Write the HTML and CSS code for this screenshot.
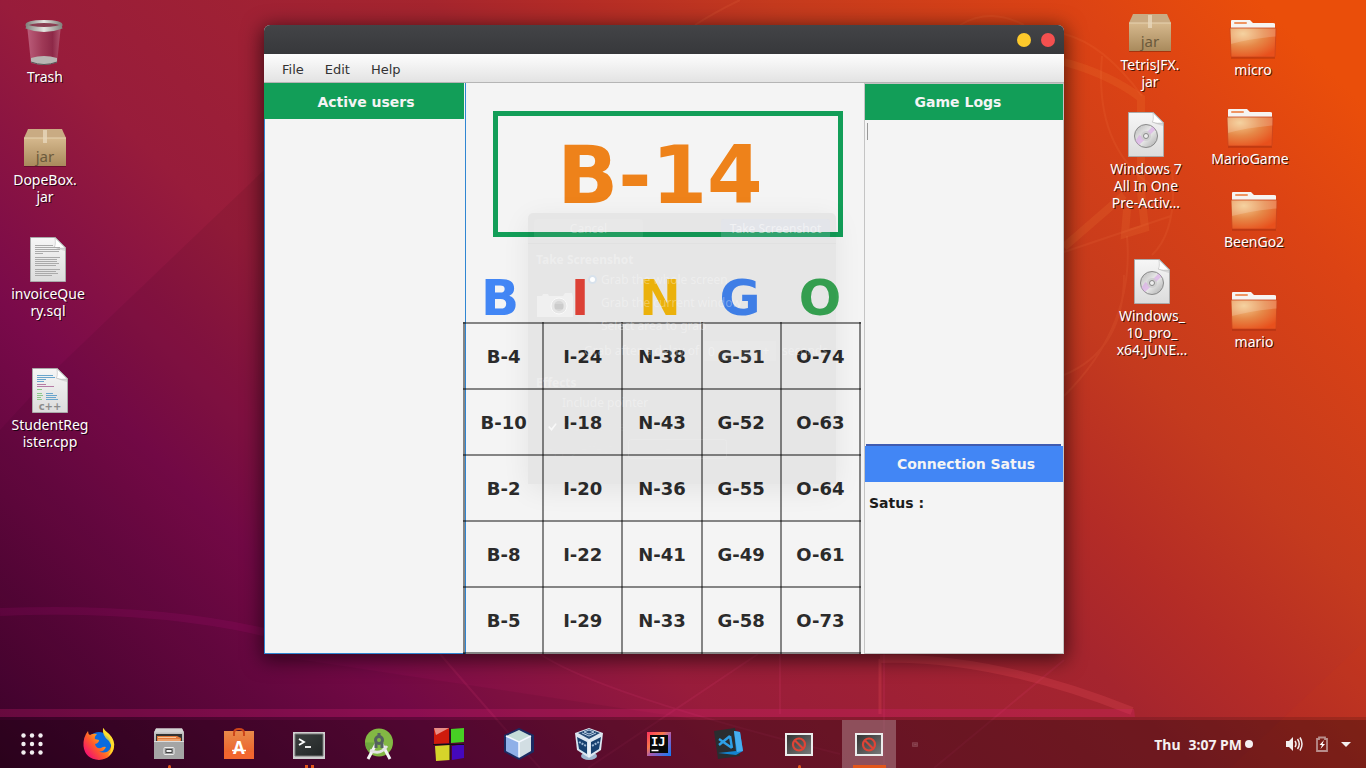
FILE: index.html
```html
<!DOCTYPE html>
<html lang="en">
<head>
<meta charset="utf-8">
<title>Bingo</title>
<link rel="stylesheet" href="styles.css">
</head>
<body>
<svg width="0" height="0" class="defs" aria-hidden="true">
  <defs>
    <linearGradient id="gBox" x1="0" y1="0" x2="0" y2="1"><stop offset="0" stop-color="#d5b88d"/><stop offset="1" stop-color="#a98a5c"/></linearGradient>
    <linearGradient id="gPage" x1="0" y1="0" x2="0" y2="1"><stop offset="0" stop-color="#f6f6f6"/><stop offset="1" stop-color="#dcdcdc"/></linearGradient>
    <radialGradient id="gFolder" cx=".28" cy=".2" r=".9"><stop offset="0" stop-color="#f3c98c"/><stop offset=".5" stop-color="#e68848"/><stop offset="1" stop-color="#e8501c"/></radialGradient>
    <linearGradient id="gTrash" x1="0" y1="0" x2="1" y2="0"><stop offset="0" stop-color="#c7738f"/><stop offset=".45" stop-color="#a14360"/><stop offset=".75" stop-color="#8a2d4c"/><stop offset="1" stop-color="#b8657f"/></linearGradient>
    <linearGradient id="gMetal" x1="0" y1="0" x2="1" y2="0"><stop offset="0" stop-color="#84847f"/><stop offset=".5" stop-color="#e4e4e0"/><stop offset="1" stop-color="#84847f"/></linearGradient>
    <linearGradient id="gDisc" x1="0" y1="0" x2="1" y2="1"><stop offset="0" stop-color="#b5b5b5"/><stop offset=".5" stop-color="#eeeeee"/><stop offset="1" stop-color="#a8a8a8"/></linearGradient>
    <linearGradient id="gFox" x1="1" y1="0" x2=".1" y2=".8"><stop offset="0" stop-color="#fff44f"/><stop offset=".4" stop-color="#ffb01c"/><stop offset=".7" stop-color="#ff5a2c"/><stop offset="1" stop-color="#f5156c"/></linearGradient>
    <linearGradient id="gCab" x1="0" y1="0" x2="0" y2="1"><stop offset="0" stop-color="#c8c8c8"/><stop offset="1" stop-color="#8f8f8f"/></linearGradient>
    <linearGradient id="gBag" x1="0" y1="0" x2="0" y2="1"><stop offset="0" stop-color="#e88a4a"/><stop offset="1" stop-color="#ee5a24"/></linearGradient>
    <linearGradient id="gTerm" x1="0" y1="0" x2="1" y2="1"><stop offset="0" stop-color="#3c4040"/><stop offset="1" stop-color="#222626"/></linearGradient>
    <linearGradient id="gIj" x1="0" y1="0" x2="1" y2="1"><stop offset="0" stop-color="#fe315d"/><stop offset=".35" stop-color="#f97a4a"/><stop offset=".55" stop-color="#a35bb5"/><stop offset="1" stop-color="#087cfa"/></linearGradient>
    <linearGradient id="gNo" x1="0" y1="0" x2="1" y2="1"><stop offset="0" stop-color="#333"/><stop offset="1" stop-color="#777"/></linearGradient>
    <symbol id="jar" viewBox="0 0 48 48">
      <path d="M3 42h42v2H3z" fill="#000" opacity=".25"/>
      <path d="M7 6h34l4 9H3z" fill="#c9ab83"/><path d="M3 15h42v28H3z" fill="url(#gBox)"/>
      <path d="M3 15h42" stroke="#e6d3b0"/><path d="M22 7h4v13h-4z" fill="#e7d7bb" opacity=".8"/>
      <text x="24" y="39" text-anchor="middle" class="jar-text">jar</text>
    </symbol>
    <symbol id="page" viewBox="0 0 48 48">
      <path d="M6.500.500h25l10 10v34h-35z" fill="url(#gPage)" stroke="#aaa"/>
      <path d="M31 1q1 8-1 9 5 2 11 1z" fill="#fff" stroke="#bbb" stroke-width=".6"/><path d="M30 10q5 2 11 1v3q-8-2-11-4z" fill="#000" opacity=".1"/>
    </symbol>
    <symbol id="disc" viewBox="0 0 48 48">
      <use href="#page"/><circle cx="24" cy="24" r="11.500" fill="url(#gDisc)" stroke="#8a8a8a"/>
      <path d="M15 30l4-6M15.500 31.500l6-5.500M26 22l6-6" stroke="#d9a9e6" stroke-width="4" opacity=".65"/>
      <circle cx="24" cy="24" r="5" fill="#ccc" opacity=".8"/><circle cx="24" cy="24" r="2.500" fill="#eee" stroke="#888"/>
    </symbol>
    <symbol id="folder" viewBox="0 0 48 48">
      <path d="M2 8q0-1 1-1h18l3 3h20q2 0 2 1v8H2z" fill="#f6f4f2"/><rect x="5" y="9" width="13" height="2" rx="1" fill="#ef9462"/>
      <path d="M1 15h46l-1 28q0 1-1 1H3q-1 0-1-1z" fill="url(#gFolder)" stroke="#c9441c" stroke-width=".8"/>
      <path d="M1.500 15.500h45v8Q20 26 2 31z" fill="#fff" opacity=".18"/><path d="M2 45h44" stroke="#7a1d08" opacity=".45"/>
    </symbol>
    <symbol id="blocked" viewBox="0 0 32 32">
      <path d="M2 5h28v23H2z" fill="#ececec"/><path d="M4 7h24v19H4z" fill="url(#gNo)"/>
      <circle cx="16" cy="16.500" r="6" fill="none" stroke="#df4436" stroke-width="2.200"/><path d="M12 12.500l8 8" stroke="#df4436" stroke-width="2.200"/>
    </symbol>
  </defs>
</svg>

<main class="desktop">
  <svg class="wallpaper" viewBox="0 0 1366 768" preserveAspectRatio="none" aria-hidden="true">
    <path d="M264 170L60 365 0 430v290h700L264 654z" fill="#000" opacity=".06"/>
    <path d="M1366 640L1230 768h136z" fill="#ff4a00" opacity=".04"/>
    <g fill="none" stroke="#e8407a" opacity=".13">
      <path d="M0 612q150-6 264 20" stroke="#c8108a" stroke-width="8"/>
      <path d="M440 654q60 70 100 114M540 654q60 40 300 100M758 654l-170 114M780 654v60M884 654v114M1064 660l-130 108" stroke-width="2"/>
    </g>
    <g fill="none" stroke="#f0505a" opacity=".24">
      <path d="M880 659q110-4 252 52" stroke-width="8"/>
      <path d="M880 659v55" stroke-width="3"/>
    </g>
    <path d="M0 709h1134l1 8H0z" fill="#e0207a" opacity=".24"/>
    <path d="M1064 62q45 12 77 36v94l4 36-20 6 2-25M1064 247l60-52" fill="none" stroke="#f58a3a" stroke-width="8" opacity=".15"/>
    <g fill="none" stroke="#ff8a50" stroke-width="2" opacity=".11">
      <path d="M1064 34q40 10 78 62M1102 56q-8 90 50 130M1064 252l107-36M1172 170q6 60-20 85M1127 236q8 90-63 160M1064 375q60-25 60-100"/>
      <path d="M740 0q-25 12-45 25M960 25q30-18 64 0"/>
    </g>
    <path d="M0 717h1366v3H0z" fill="#000" opacity=".14"/>
  </svg>

  <a class="shortcut trash" href="#trash"><svg viewBox="0 0 48 48"><path d="M6 5h34l-4 38q-13 4-26 0z" fill="url(#gTrash)" opacity=".75"/><path d="M10 38q13-4 26 0v4q-13 6-26 0z" fill="#b9b5b3"/><path d="M10 42q13 5 26 0" fill="none" stroke="#555"/><ellipse cx="23" cy="5" rx="17" ry="3.500" fill="#8a3f52" stroke="url(#gMetal)" stroke-width="3"/><path d="M5 7q18 7 36 0" fill="none" stroke="url(#gMetal)" stroke-width="3"/></svg><span>Trash</span></a>
  <a class="shortcut dopebox" href="#dopebox"><svg><use href="#jar"/></svg><span>DopeBox.<br>jar</span></a>
  <a class="shortcut invoice" href="#invoice"><svg viewBox="0 0 48 48"><use href="#page"/><path d="M11 8.500h18M11 10.500h25M11 12.500h25M11 14.500h24M11 16.500h8M11 20.500h25M11 22.500h22M11 24.500h22M11 26.500h24M11 28.500h21M11 32.500h25M11 34.500h21M11 36.500h23M11 38.500h17" stroke="#aaa" stroke-width="1"/></svg><span>invoiceQue<br>ry.sql</span></a>
  <a class="shortcut student" href="#student"><svg viewBox="0 0 48 48"><use href="#page"/><path d="M11 7.500h16M11 9.500h18M11 11.500h9M11 13.500h7M20 25.500h7M20 27.500h11M20 29.500h10M20 31.500h12" stroke="#6aa5cc"/><path d="M11 16.500h9M11 18.500h17" stroke="#b77ba5"/><path d="M11 21.500h5M11 25.500h5M11 27.500h6M11 29.500h4M11 31.500h5" stroke="#8cc98a"/><text x="24" y="42" text-anchor="middle" class="cpp-text">c++</text></svg><span>StudentReg<br>ister.cpp</span></a>
  <a class="shortcut tetris" href="#tetris"><svg><use href="#jar"/></svg><span>TetrisJFX.<br>jar</span></a>
  <a class="shortcut win7" href="#win7"><svg><use href="#disc"/></svg><span>Windows 7<br>All In One<br>Pre-Activ…</span></a>
  <a class="shortcut win10" href="#win10"><svg><use href="#disc"/></svg><span>Windows_<br>10_pro_<br>x64.JUNE…</span></a>
  <a class="shortcut micro" href="#micro"><svg><use href="#folder"/></svg><span>micro</span></a>
  <a class="shortcut mariogame" href="#mariogame"><svg><use href="#folder"/></svg><span>MarioGame</span></a>
  <a class="shortcut beengo" href="#beengo"><svg><use href="#folder"/></svg><span>BeenGo2</span></a>
  <a class="shortcut mario" href="#mario"><svg><use href="#folder"/></svg><span>mario</span></a>

  <section class="window" aria-label="Bingo">
    <header class="titlebar">
      <button class="dot minimize" aria-label="Minimize"></button>
      <button class="dot close" aria-label="Close"></button>
    </header>
    <nav class="menubar"><button>File</button><button>Edit</button><button>Help</button></nav>
    <div class="panes">
      <section class="users"><h2 class="bar">Active users</h2></section>
      <section class="board">
        <output class="called">B-14</output>
        <div class="letters"><span class="b">B</span><span class="i">I</span><span class="n">N</span><span class="g">G</span><span class="o">O</span></div>
        <table class="card">
          <tr><td>B-4</td><td>I-24</td><td>N-38</td><td>G-51</td><td>O-74</td></tr>
          <tr><td>B-10</td><td>I-18</td><td>N-43</td><td>G-52</td><td>O-63</td></tr>
          <tr><td>B-2</td><td>I-20</td><td>N-36</td><td>G-55</td><td>O-64</td></tr>
          <tr><td>B-8</td><td>I-22</td><td>N-41</td><td>G-49</td><td>O-61</td></tr>
          <tr><td>B-5</td><td>I-29</td><td>N-33</td><td>G-58</td><td>O-73</td></tr>
        </table>
      </section>
      <section class="side">
        <h2 class="bar">Game Logs</h2>
        <div class="log"><span class="caret"></span></div>
        <div class="rule"></div>
        <h2 class="bar blue">Connection Satus</h2>
        <p class="status">Satus :</p>
      </section>
    </div>
  </section>

  <form class="ghost">
    <div class="ghost-head"><button type="button">Cancel</button><button type="button" class="primary">Take Screenshot</button></div>
    <div class="ghost-body">
      <h3>Take Screenshot</h3>
      <div class="grab">
        <svg class="camera" viewBox="0 0 38 26" aria-hidden="true"><path d="M1 4h5l1-2h5l1 2h14l2-3h7l1 4v20H1z" fill="#fff" opacity=".4"/><circle cx="23" cy="14" r="8" fill="#e2e2e2" stroke="#fff" opacity=".7"/><circle cx="23" cy="14" r="5" fill="#d6d6d6"/><path d="M19 12h8v5h-8z" fill="#ccc"/></svg>
        <div class="choices">
          <label><input type="radio" name="area" checked>Grab the whole screen</label>
          <label><input type="radio" name="area">Grab the current window</label>
          <label><input type="radio" name="area">Select area to grab</label>
        </div>
      </div>
      <div class="delay"><label for="delay">Grab after a delay of</label><input id="delay" value="0"><button type="button">−</button><button type="button">+</button><span>seconds</span></div>
      <h3>Effects</h3>
      <label class="opt"><input type="checkbox">Include pointer</label>
      <label class="opt dim"><input type="checkbox" checked>Include the window border</label>
      <div class="effect"><label for="effect">Apply effect:</label><select id="effect"><option>None</option></select></div>
    </div>
  </form>
</main>

<footer class="taskbar">
  <button class="apps" aria-label="Show applications"><svg viewBox="0 0 32 32" fill="#f2eef0"><circle cx="7.500" cy="7.500" r="2.200"/><circle cx="16" cy="7.500" r="2.200"/><circle cx="24.500" cy="7.500" r="2.200"/><circle cx="7.500" cy="16" r="2.200"/><circle cx="16" cy="16" r="2.200"/><circle cx="24.500" cy="16" r="2.200"/><circle cx="7.500" cy="24.500" r="2.200"/><circle cx="16" cy="24.500" r="2.200"/><circle cx="24.500" cy="24.500" r="2.200"/></svg></button>
  <button class="task" aria-label="Firefox"><svg viewBox="0 0 32 32"><circle cx="16" cy="16" r="12" fill="#0a6be0"/><path d="M20 0q2 3 6 6 6 6 5 13-2 12-15 13Q2 31 .500 18 0 9 5 3q0 3 2 4 3-2 7-1-3 3-2 5l4 1q0 3-4 4 1 5 6 4 3-2 5-1-3 6-8 4 8 4 12-2 3-6-2-12-6-3-5-9z" fill="url(#gFox)"/><path d="M20 0q2 3 6 6 6 6 5 13-1 6-6 9 6-8 1-15-7-5-6-13z" fill="#ffe52e" opacity=".8"/></svg></button>
  <button class="task" aria-label="Files"><svg viewBox="0 0 32 32"><path d="M3 .500h26l2 4V31H1V4.500z" fill="url(#gCab)"/><path d="M3 .500h26l2 4H1z" fill="#d4d4d4"/><path d="M3 6h26v7H3z" fill="#333"/><path d="M4 8h20l4 2v4H4z" fill="#e27a3a"/><path d="M5 9.500h18M5 12h22" stroke="#f6c79c"/><path d="M1 13h30v18H1z" fill="#a5a5a5"/><path d="M1 13.500h30" stroke="#ddd"/><rect x="11" y="19.500" width="10" height="7" rx="1" fill="#999" stroke="#eee"/><path d="M13 21.500h6v3h-6z" fill="#eee" stroke="#444"/></svg><i class="mark one"></i></button>
  <button class="task" aria-label="Software"><svg viewBox="0 0 32 32"><path d="M1 3h30v28H1z" fill="url(#gBag)"/><path d="M1 24h30v7H1z" fill="#f2662f"/><path d="M11 8V5q0-4 5-4t5 4v3" fill="none" stroke="#cc451a" stroke-width="2"/><text x="16" y="26" text-anchor="middle" class="bag-text">A</text><path d="M9 22.500h14" stroke="#fff" stroke-width="1.500"/></svg></button>
  <button class="task" aria-label="Terminal"><svg viewBox="0 0 32 32"><path d="M0 4h32v27H0z" fill="#cfcfcf"/><path d="M2 6h28v22H2z" fill="url(#gTerm)" stroke="#777"/><path d="M6 11l5 3-5 3" fill="none" stroke="#fff" stroke-width="1.800"/><path d="M12 19h6" stroke="#fff" stroke-width="1.800"/></svg><i class="mark two"></i></button>
  <button class="task" aria-label="Android Studio"><svg viewBox="0 0 32 32"><circle cx="16" cy="14.500" r="14" fill="#83b844"/><path d="M16 14.500H2a14 14 0 0 0 5 10z" fill="#5f9a3a" opacity=".6"/><path d="M5 31l8-15M27 31l-8-15" stroke="#f4f4f4" stroke-width="3"/><path d="M7 22q10 6 17-4" fill="none" stroke="#e4e4e4" stroke-width="2.800"/><circle cx="16" cy="12" r="3.500" fill="none" stroke="#55615f" stroke-width="3"/><path d="M16 5v4M13 15v5M19 15v5" stroke="#55615f" stroke-width="3"/></svg></button>
  <button class="task" aria-label="Code Blocks"><svg viewBox="0 0 32 32"><path d="M1 0h15v15L1 16z" fill="#cf1b0c"/><path d="M1 0h15L3 7z" fill="#fff" opacity=".5"/><path d="M18 1l13-1v14l-13 1z" fill="#47cf24"/><path d="M2 18l15-1v15L3 33z" fill="#d6d42a"/><path d="M19 18l12-2v14l-12 2z" fill="#4508bd"/><path d="M17 0v32M0 16.500h31" stroke="#111"/></svg></button>
  <button class="task" aria-label="NetBeans"><svg viewBox="0 0 32 32"><path d="M16 0l15 7v17l-15 8-15-8V7z" fill="#1b2b62"/><path d="M16 2l12 6-12 6L3 8z" fill="#c5ddd8"/><path d="M3 8l13 6v16L3 23z" fill="#8fb0e8"/><path d="M16 14l12-6v15l-12 7z" fill="#d2dee3"/><path d="M16 14v15M3 8l13 6 12-6" stroke="#f4f8ff" fill="none" stroke-width="1.500"/></svg></button>
  <button class="task" aria-label="VirtualBox"><svg viewBox="0 0 32 32"><ellipse cx="16" cy="28" rx="8" ry="4" fill="#9fb6cf"/><path d="M16 0l14 5-2 17-12 8L4 22 2 5z" fill="#dce6f0"/><path d="M16 1l11 4-11 6L5 5z" fill="#264a75"/><path d="M16 2l5 2-5 2-5-2zM9 5l7 3 7-3" fill="none" stroke="#b8cde2"/><path d="M4 9l10 5v12l-8-5zM28 9l-10 5v12l8-5z" fill="#17406f"/><path d="M6 14l7 4M26 14l-7 4" stroke="#9eb8d4" stroke-width="2" stroke-dasharray="2 1"/><path d="M16 12v17" stroke="#fff"/></svg></button>
  <button class="task" aria-label="IntelliJ IDEA"><svg viewBox="0 0 32 32"><path d="M4 4h24v24H4z" fill="url(#gIj)"/><path d="M7 7h18v18H7z" fill="#080808"/><text x="8" y="18" class="ij-text">IJ</text><path d="M8.500 22.500h7" stroke="#fff" stroke-width="1.500"/></svg></button>
  <button class="task" aria-label="Visual Studio Code"><svg viewBox="0 0 32 32"><path d="M1 3l21-3 5 28-22 3z" fill="#2a2d30"/><path d="M21 3l6 1 3 19-7 4-18-2 18-2z" fill="#1384cf"/><path d="M21 3l6 1 3 19-6 1z" fill="#46aef0"/><path d="M17 8L6 17M6 11l13 9M17 8l2 12" stroke="#2e9fe6" stroke-width="2.400" fill="none"/></svg></button>
  <button class="task" aria-label="Java application"><svg><use href="#blocked"/></svg><i class="mark one"></i></button>
  <button class="task active" aria-label="Bingo"><svg><use href="#blocked"/></svg><i class="mark bar-mark"></i></button>
  <svg class="fading" viewBox="0 0 8 6" aria-hidden="true"><path d="M.500.500h7v5h-7zM3 3h3" fill="#b07a80" fill-opacity=".3" stroke="#a8707a" stroke-opacity=".6" stroke-width=".8"/></svg>
  <time class="clock"><span>Thu</span><span>3:07 PM</span></time>
  <i class="notice"></i>
  <button class="tray" aria-label="System menu"><svg width="18" height="16" viewBox="0 0 18 16"><path d="M1 5h3l4-4v14l-4-4H1z" fill="#f4eeee"/><path d="M10 5q2 3 0 6M12.500 3q3.500 5 0 10M15 1.500q4 6.500 0 13" fill="none" stroke="#f4eeee" stroke-width="1.500"/></svg><svg width="14" height="16" viewBox="0 0 14 16"><path d="M2 3h2V1.500h6V3h2v12H2z" fill="none" stroke="#b98e8c" stroke-width="1.800"/><path d="M9 4L4.500 9H7l-1.500 4L10 8H7.500z" fill="#fff"/></svg><svg width="10" height="16" viewBox="0 0 10 16"><path d="M0 6h10l-5 5z" fill="#f4eeee"/></svg></button>
</footer>
</body>
</html>
```
FILE: styles.css
```css
* { box-sizing: border-box; }
body {
  margin: 0;
  height: 100vh;
  display: flex;
  flex-direction: column;
  overflow: hidden;
  font-family: "Noto Sans", "Open Sans", sans-serif;
  background: linear-gradient(45deg, #40032a 0%, #4a0432 4%, #7a0a4a 22%, #981c3b 36%, #a5252e 56%, #b42c26 63%, #c43a1e 72%, #dc4314 86%, #ea4e0a 95%, #ea4e0a 100%);
}
button, input, select { font: inherit; color: inherit; border: 0; background: none; padding: 0; margin: 0; }
h2, h3, p { margin: 0; }
.defs { position: absolute; }
.desktop { flex: 1; min-height: 0; }
.wallpaper { position: absolute; left: 0; top: 0; width: 100%; height: 100%; z-index: -1; }

/* Desktop shortcuts */
.shortcut {
  position: absolute;
  width: 90px;
  display: flex;
  flex-direction: column;
  align-items: center;
  color: #fff;
  font-size: 14px;
  line-height: 17px;
  text-align: center;
  text-decoration: none;
  text-shadow: 1px 1px 0 rgba(0, 0, 0, 0.7);
  white-space: nowrap;
}
.shortcut svg { width: 48px; height: 48px; overflow: visible; }
.jar-text { font: 15px "Noto Sans", sans-serif; fill: #6b5a3c; text-shadow: none; }
.cpp-text { font: bold 10px "DejaVu Sans", sans-serif; fill: #8c8c8c; text-shadow: none; }
.trash { left: 0; top: 20px; }
.dopebox { left: 0; top: 123px; }
.invoice { left: 3px; top: 237px; }
.student { left: 5px; top: 368px; }
.tetris { right: 171px; top: 8px; }
.win7 { right: 175px; top: 112px; }
.win10 { right: 169px; top: 259px; }
.micro { right: 68px; top: 13px; }
.mariogame { right: 71px; top: 102px; }
.beengo { right: 67px; top: 185px; }
.mario { right: 67px; top: 285px; }

/* Bingo window */
.window {
  position: absolute;
  left: 264px;
  right: 302px;
  top: 25px;
  bottom: 114px;
  display: flex;
  flex-direction: column;
  border-radius: 6px 6px 0 0;
  background: #f4f4f4;
  box-shadow: 0 4px 20px 2px rgba(0, 0, 0, 0.6);
  font-family: "DejaVu Sans", sans-serif;
}
.titlebar {
  height: 29px;
  display: flex;
  justify-content: flex-end;
  align-items: center;
  gap: 10px;
  padding-right: 9px;
  border-radius: 6px 6px 0 0;
  background: linear-gradient(#434447, #37383b);
}
.dot { width: 14px; height: 14px; border-radius: 50%; }
.minimize { background: #fdc92b; }
.close { background: #f4504f; }
.menubar {
  height: 29px;
  display: flex;
  align-items: center;
  gap: 21px;
  padding: 2px 18px 0;
  border-bottom: 1px solid #b5b5b5;
  background: linear-gradient(#fdfdfd, #e3e3e3);
  font-size: 13px;
  color: #333;
}
.panes { flex: 1; min-height: 0; display: grid; grid-template-columns: 202px minmax(0, 1fr) 200px; }
.users { border: solid #2f86d2; border-width: 0 1px 1px; }
.users .bar { margin-left: -1px; margin-right: 1px; padding-left: 4px; line-height: 38px; }
.bar {
  height: 36px;
  line-height: 36px;
  text-align: center;
  font-size: 14px;
  font-weight: bold;
  color: #f4f4f4;
  background: #129e58;
}
.board { display: flex; flex-direction: column; align-items: center; }
.called {
  width: 350px;
  margin: 28px 0 0 6px;
  border: 5px solid #129e58;
  padding-right: 16px;
  height: 126px;
  line-height: 120px;
  text-align: center;
  font-size: 80px;
  font-weight: bold;
  color: #ee821a;
}
.letters {
  width: 400px;
  margin: 32px 10px 0 0;
  display: grid;
  grid-template-columns: repeat(5, 1fr);
  height: 53px;
  line-height: 58px;
  text-align: center;
  font-size: 50px;
  font-weight: bold;
}
.b { color: #4286f5; }
.i { color: #e9453a; }
.n { color: #f9bc0c; }
.g { color: #4386f4; }
.o { color: #38a854; }
.card {
  width: 398px;
  margin-right: 6px;
  table-layout: fixed;
  border-collapse: collapse;
  font-size: 18px;
  font-weight: bold;
  color: #2b2b2b;
}
.card td { height: 66px; padding: 0; text-align: center; border: 2px solid rgba(0, 0, 0, 0.46); }
.side { display: flex; flex-direction: column; border: 1px solid #c4c4c4; }
.side .bar { flex: none; padding-right: 12px; }
.log { flex: 1; padding: 3px 2px; }
.caret { display: block; width: 1px; height: 17px; background: #999; }
.rule { height: 2px; margin: 0 2px 0 1px; background: #3f5bb0; }
.side .blue { background: #4286f5; padding: 0 0 0 4px; }
.status { height: 171px; padding: 12px 4px; font-size: 14px; line-height: 18px; font-weight: bold; color: #1c1c1c; }

/* Screenshot dialog fading out above the window */
.ghost {
  position: absolute;
  left: 528px;
  top: 213px;
  width: 308px;
  height: 271px;
  border-radius: 5px 5px 0 0;
  background: rgba(0, 0, 0, 0.055);
  box-shadow: 0 6px 28px rgba(0, 0, 0, 0.07);
  color: rgba(255, 255, 255, 0.32);
  font-size: 12px;
  line-height: 16px;
}
.ghost-head { display: flex; justify-content: space-between; padding: 6px; height: 31px; border-bottom: 1px solid rgba(0, 0, 0, 0.02); }
.ghost-head button { width: 109px; height: 20px; border-radius: 3px; background: rgba(255, 255, 255, 0.08); }
.ghost-head .primary { background: rgba(210, 226, 255, 0.16); color: rgba(255, 255, 255, 0.5); }
.ghost-body { padding: 8px; }
.ghost h3 { font-size: 12px; line-height: 16px; }
.grab { display: flex; align-items: center; gap: 14px; }
.camera { width: 38px; height: 26px; margin-top: 4px; }
.choices label { display: flex; align-items: center; gap: 4px; height: 23px; white-space: nowrap; }
.ghost input[type=radio], .ghost input[type=checkbox] { appearance: none; width: 9px; height: 9px; border-radius: 50%; background: rgba(255, 255, 255, 0.02); }
.ghost input[type=radio]:checked { background: #fff; border: 2px solid #d8e2ec; }
.delay { display: flex; align-items: center; height: 20px; margin: 4px 0 0 48px; white-space: nowrap; }
.delay label { width: 120px; }
.delay input { width: 32px; height: 20px; padding-left: 4px; background: rgba(255, 255, 255, 0.08); }
.delay button { width: 20px; height: 20px; background: rgba(255, 255, 255, 0.08); }
.delay span { margin-left: 6px; }
.delay + h3 { margin-top: 14px; }
.opt { display: flex; align-items: center; gap: 5px; height: 24px; padding-left: 12px; }
.ghost .opt input { border-radius: 2px; }
.dim, .effect { color: rgba(255, 255, 255, 0.06); }
.ghost .dim input { background: rgba(255, 255, 255, 0.7); clip-path: polygon(0 50%, 15% 40%, 38% 65%, 85% 5%, 100% 15%, 40% 95%); }
.effect { display: flex; align-items: center; gap: 12px; padding-left: 10px; }
.effect select { width: 99px; height: 20px; appearance: none; padding-left: 12px; border: 1px solid rgba(255, 255, 255, 0.12); border-radius: 3px; }

/* Taskbar */
.taskbar {
  position: relative;
  height: 48px;
  display: flex;
  align-items: stretch;
  gap: 16px;
  padding: 0 15px 0 7px;
  background: rgba(0, 0, 0, 0.33);
  color: #f6f0f0;
}
.apps, .task { position: relative; width: 54px; display: flex; align-items: center; justify-content: center; }
.apps { width: 49px; }
.apps svg, .task svg { width: 32px; height: 32px; overflow: visible; }
.active { background: rgba(255, 255, 255, 0.25); }
.mark { position: absolute; bottom: 0; height: 3px; width: 3px; background: #e2561b; }
.one { border-radius: 2px 2px 0 0; }
.two { width: 9px; background: linear-gradient(90deg, #e2561b 3px, transparent 3px, transparent 6px, #e2561b 6px); }
.bar-mark { width: 33px; }
.fading { width: 6px; height: 5px; align-self: center; margin-right: auto; }
.clock { display: flex; align-items: center; gap: 8px; font-size: 14px; font-weight: bold; white-space: nowrap; }
.notice { align-self: center; width: 8px; height: 8px; margin-left: -13px; border-radius: 50%; background: #f6f0f0; }
.tray { display: flex; align-items: center; gap: 12px; margin-left: 16px; }
.bag-text { font: bold 17px "Noto Sans", sans-serif; fill: #fff; }
.ij-text { font: bold 12px "DejaVu Sans Mono", monospace; fill: #fff; }
```
